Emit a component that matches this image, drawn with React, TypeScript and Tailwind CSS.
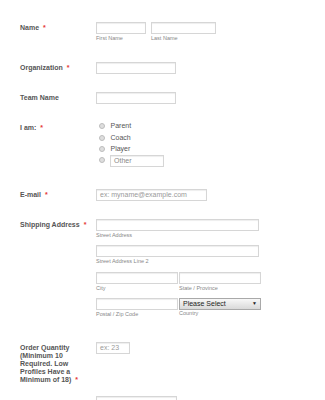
import type { ReactNode } from 'react'

const font = "font-['Liberation_Sans',Arial,sans-serif]"
const box = 'h-[12px] border border-[#d6d6d6] bg-white shadow-[inset_0_1px_1px_#eeeeee]'

function Req() {
  return <span className="ml-[4px] text-[#e53935]">*</span>
}

function Label({ children, pt = 'pt-[2px]' }: { children: ReactNode; pt?: string }) {
  return (
    <div className={`w-[76px] shrink-0 pr-[6px] ${pt} text-[7px] font-bold leading-[8px] text-[#555]`}>
      {children}
    </div>
  )
}

function Field({ w, sub, placeholder }: { w: string; sub?: string; placeholder?: string }) {
  return (
    <div className={w}>
      <div className={`${box} flex items-center px-[3px] text-[7px] text-[#999]`}>{placeholder}</div>
      {sub && <div className="mt-[1px] text-[5.5px] leading-[7px] text-[#888]">{sub}</div>}
    </div>
  )
}

function Radio({ children }: { children: ReactNode }) {
  return (
    <div className="flex h-[11.5px] items-center">
      <span className="h-[6px] w-[6px] rounded-full border border-[#bdbdbd] bg-[#dedede]" />
      <span className="ml-[5.5px] text-[7px] text-[#555]">{children}</span>
    </div>
  )
}

export default function App() {
  return (
    <div className={`h-[400px] w-[325px] overflow-hidden bg-white pl-[20px] pt-[22px] ${font}`}>
      <div className="flex">
        <Label>
          Name<Req />
        </Label>
        <div className="flex gap-[5px]">
          <Field w="w-[50px]" sub="First Name" />
          <Field w="w-[65px]" sub="Last Name" />
        </div>
      </div>

      <div className="mt-[20px] flex">
        <Label>
          Organization<Req />
        </Label>
        <Field w="w-[80px]" />
      </div>

      <div className="mt-[18px] flex">
        <Label>Team Name</Label>
        <Field w="w-[80px]" />
      </div>

      <div className="mt-[16.5px] flex">
        <Label pt="pt-[3px]">
          I am:<Req />
        </Label>
        <div className="pl-[3px]">
          <Radio>Parent</Radio>
          <Radio>Coach</Radio>
          <Radio>Player</Radio>
          <div className="flex h-[13px] items-start">
            <span className="mt-[2px] h-[6px] w-[6px] rounded-full border border-[#bdbdbd] bg-[#dedede]" />
            <div className={`ml-[5px] flex h-[12.5px] w-[54px] items-center px-[3px] text-[7px] text-[#888] ${box}`}>
              Other
            </div>
          </div>
        </div>
      </div>

      <div className="mt-[21px] flex">
        <Label>
          E-mail<Req />
        </Label>
        <Field w="w-[111px]" placeholder="ex: myname@example.com" />
      </div>

      <div className="mt-[18px] flex">
        <Label>
          Shipping Address<Req />
        </Label>
        <div className="flex w-[165px] flex-col gap-[6.4px]">
          <Field w="w-[163px]" sub="Street Address" />
          <Field w="w-[163px]" sub="Street Address Line 2" />
          <div className="flex gap-[1px]">
            <Field w="w-[82px]" sub="City" />
            <Field w="w-[82px]" sub="State / Province" />
          </div>
          <div className="flex gap-[1px]">
            <Field w="w-[82px]" sub="Postal / Zip Code" />
            <div className="w-[82px]">
              <div className="flex h-[12px] items-center justify-between border border-[#a9a9a9] bg-gradient-to-b from-[#f8f8f8] to-[#d9d9d9] px-[3px] text-[7px] text-[#222]">
                <span>Please Select</span>
                <span className="text-[5px]">▼</span>
              </div>
              <div className="text-[5.5px] leading-[7px] text-[#888]">Country</div>
            </div>
          </div>
        </div>
      </div>

      <div className="mt-[24px] flex">
        <Label>
          Order Quantity (Minimum 10 Required. Low Profiles Have a Minimum of 18)<Req />
        </Label>
        <Field w="w-[34px]" placeholder="ex: 23" />
      </div>

      <div className="mt-[12px] flex">
        <Label> </Label>
        <Field w="w-[81px]" />
      </div>
    </div>
  )
}
